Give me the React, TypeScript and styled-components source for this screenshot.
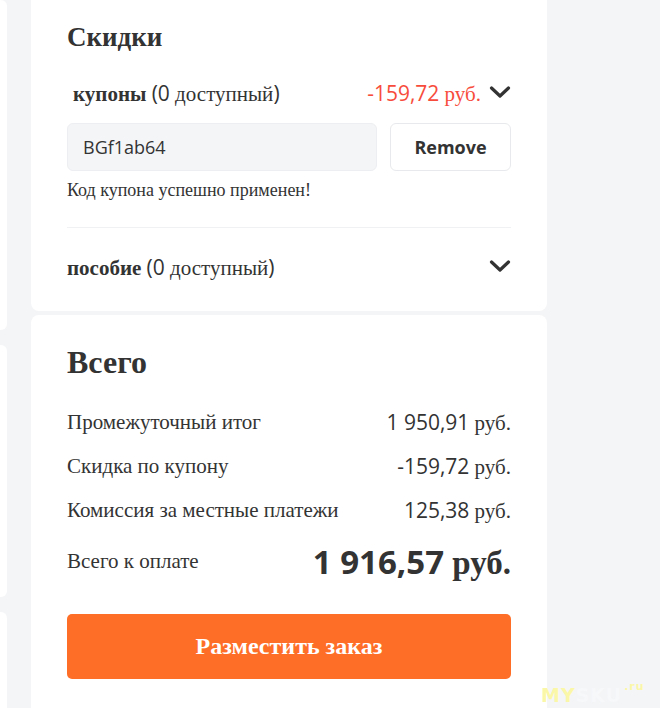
import React from "react";
import styled, { createGlobalStyle } from "styled-components";

const Global = createGlobalStyle`
  html, body { margin: 0; padding: 0; background: #f4f5f7; }
  body { font-family: "Liberation Serif", "Times New Roman", serif; color: #333; }
  * { box-sizing: border-box; }
`;

const Page = styled.div`
  display: flex;
  gap: 24px;
  height: 708px;
  overflow: hidden;
  position: relative;
`;

const Side = styled.div`
  width: 7px;
  display: flex;
  flex-direction: column;
  gap: 15px;
`;

const SideCard = styled.div<{ $h: number }>`
  height: ${(p) => p.$h}px;
  flex-shrink: 0;
  background: #fff;
  border-radius: 0 6px 6px 0;
`;

const Main = styled.div`
  width: 516px;
  display: flex;
  flex-direction: column;
  gap: 4px;
`;

const Card = styled.section<{ $pt: number; $pb: number }>`
  background: #fff;
  border-radius: 0 0 8px 8px;
  padding: ${(p) => p.$pt}px 36px ${(p) => p.$pb}px;
  &:last-child { border-radius: 8px 8px 0 0; flex: 1; }
`;

const Title = styled.h2<{ $size: number; $lh: number }>`
  margin: 0;
  font-family: "Liberation Serif", serif;
  font-weight: 700;
  font-size: ${(p) => p.$size}px;
  line-height: ${(p) => p.$lh}px;
  color: #333;
`;

const AccRow = styled.div<{ $mt: number }>`
  display: flex;
  align-items: center;
  justify-content: space-between;
  height: 40px;
  margin-top: ${(p) => p.$mt}px;
`;

const AccLabel = styled.div<{ $indent?: number }>`
  padding-left: ${(p) => p.$indent || 0}px;
  font-family: "Liberation Serif", serif;
  font-size: 21px;
  color: #333;
  b { font-weight: 700; }
`;

const Sans = styled.span<{ $w?: number }>`
  font-family: "Open Sans", sans-serif;
  font-weight: ${(p) => p.$w || 400};
`;

const AccRight = styled.div`
  display: flex;
  align-items: center;
  gap: 8px;
`;

const Discount = styled.span`
  color: #f74c3c;
  font-size: 21px;
`;

const Chevron = styled.svg<{ $dy: number }>`
  width: 22px;
  height: 12px;
  display: block;
  margin-top: ${(p) => p.$dy}px;
`;

const CouponRow = styled.div`
  display: flex;
  gap: 13px;
  margin-top: 10px;
`;

const CouponInput = styled.div`
  flex: 1;
  height: 48px;
  background: #f4f5f7;
  border: 1px solid #eceef1;
  border-radius: 6px;
  display: flex;
  align-items: center;
  padding-left: 15px;
  font-family: "Open Sans", sans-serif;
  font-size: 18px;
  color: #333;
`;

const RemoveButton = styled.button`
  width: 121px;
  height: 48px;
  background: #fff;
  border: 1px solid #e8e9ec;
  border-radius: 6px;
  font-family: "Open Sans", sans-serif;
  font-weight: 700;
  font-size: 18px;
  color: #333;
  padding: 0;
`;

const Message = styled.p`
  margin: 9px 0 0;
  font-size: 18px;
  line-height: 20px;
  color: #333;
`;

const Divider = styled.hr`
  margin: 27px 0 0;
  border: 0;
  border-top: 1px solid #f0f1f3;
`;

const Rows = styled.div`
  margin-top: 18px;
  display: flex;
  flex-direction: column;
`;

const SumRow = styled.div<{ $h: number }>`
  display: flex;
  align-items: center;
  justify-content: space-between;
  height: ${(p) => p.$h}px;
  font-size: 21px;
  color: #333;
`;

const Total = styled.span`
  font-size: 33px;
  font-weight: 700;
`;

const OrderButton = styled.button`
  width: 100%;
  height: 65px;
  margin-top: 23px;
  border: 0;
  border-radius: 5px;
  background: #ff6e26;
  color: #fff;
  font-family: "Liberation Serif", serif;
  font-weight: 700;
  font-size: 24px;
`;

const Watermark = styled.div`
  position: absolute;
  left: 541px;
  top: 680px;
  font-family: "DejaVu Sans", sans-serif;
  font-weight: 700;
  font-size: 19px;
  letter-spacing: 1px;
  color: #f7f8fa;
  span { color: #fbf7a8; }
  sup { font-size: 11px; color: #fbf7a8; vertical-align: 12px; margin-left: 2px; }
`;

const Down = ({ dy = 0 }: { dy?: number }) => (
  <Chevron $dy={dy} viewBox="0 0 22 12" aria-hidden>
    <polyline points="2.5,2 11,10 19.5,2" fill="none" stroke="#333" strokeWidth="3.2" strokeLinecap="round" strokeLinejoin="round" />
  </Chevron>
);

const Money = ({ v }: { v: string }) => (
  <span>
    <Sans>{v}</Sans> руб.
  </span>
);

export default function App() {
  return (
    <>
      <Global />
      <Page>
        <Side>
          <SideCard $h={330} />
          <SideCard $h={252} />
          <SideCard $h={200} />
        </Side>
        <Main>
          <Card $pt={21} $pb={24}>
            <Title $size={27} $lh={32}>Скидки</Title>
            <AccRow $mt={20}>
              <AccLabel $indent={6}>
                <b>купоны</b> <Sans>(0</Sans> доступный<Sans>)</Sans>
              </AccLabel>
              <AccRight>
                <Discount>
                  <Sans>-159,72</Sans> руб.
                </Discount>
                <Down dy={-2} />
              </AccRight>
            </AccRow>
            <CouponRow>
              <CouponInput>BGf1ab64</CouponInput>
              <RemoveButton>Remove</RemoveButton>
            </CouponRow>
            <Message>Код купона успешно применен!</Message>
            <Divider />
            <AccRow $mt={19}>
              <AccLabel>
                <b>пособие</b> <Sans>(0</Sans> доступный<Sans>)</Sans>
              </AccLabel>
              <AccRight>
                <Down dy={-3} />
              </AccRight>
            </AccRow>
          </Card>
          <Card $pt={27} $pb={30}>
            <Title $size={32} $lh={40}>Всего</Title>
            <Rows>
              <SumRow $h={44}>
                <span>Промежуточный итог</span>
                <Money v="1 950,91" />
              </SumRow>
              <SumRow $h={44}>
                <span>Скидка по купону</span>
                <Money v="-159,72" />
              </SumRow>
              <SumRow $h={44}>
                <span>Комиссия за местные платежи</span>
                <Money v="125,38" />
              </SumRow>
              <SumRow $h={59}>
                <span>Всего к оплате</span>
                <Total>
                  <Sans $w={700}>1 916,57</Sans> руб.
                </Total>
              </SumRow>
            </Rows>
            <OrderButton>Разместить заказ</OrderButton>
          </Card>
        </Main>
        <Watermark>
          <span>MY</span>SKU<sup>.ru</sup>
        </Watermark>
      </Page>
    </>
  );
}
